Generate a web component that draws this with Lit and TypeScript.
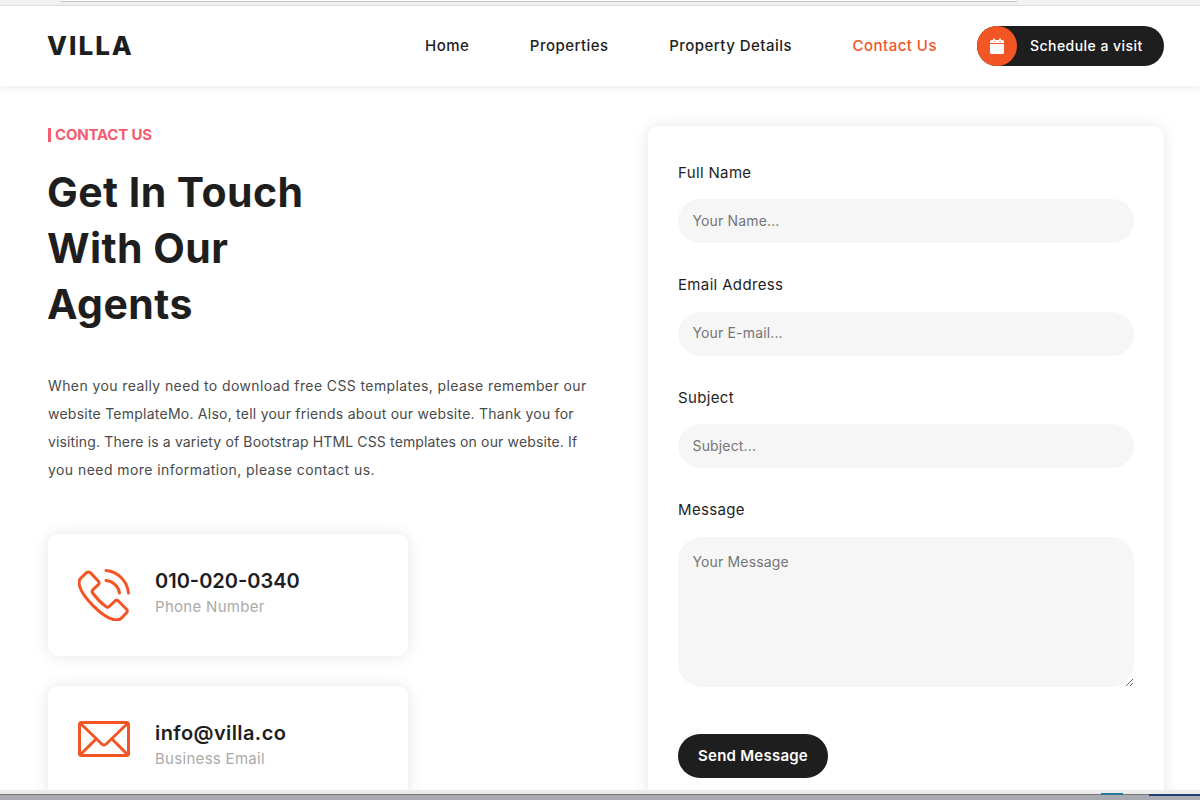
import { LitElement, html, css, svg } from 'lit';
import { customElement } from 'lit/decorators.js';

const phoneIcon = svg`
  <path d="M8.500 3.700Q10.500 2.300 12.500 3.900L20.500 12.300Q21.800 14 20.300 15.600L15 20.600Q13.500 22.200 14.600 24Q21 32.500 28 37.600Q30 38.800 31.500 37.300L37 32Q38.700 30.600 40.300 32L48.600 40.200Q50 42 48.600 43.800L43.300 49.300Q40.500 51.500 36.500 50.800C24 48.500 3.500 27 1.200 15.500Q.5 11.800 2.500 9.500Z" />
  <path d="M28 1.500A25 25 0 0 1 50.500 24" />
  <path d="M28 11.500A15 15 0 0 1 41.500 24" />
`;

const mailIcon = svg`
  <rect x="1.500" y="1.500" width="49" height="33" rx="2" />
  <path d="M2.500 2.500 23.800 23c1.300 1.200 3.100 1.200 4.400 0L49.500 2.500" />
  <path d="M2.500 33.500 17.500 18.500M49.500 33.500 34.500 18.500" />
`;

@customElement('site-header')
export class SiteHeader extends LitElement {
  static styles = css`
    :host {
      display: block;
    }

    .browser-edge {
      height: 5px;
      background: #f3f3f3;
      border-bottom: 1px solid #e4e4e4;
      display: flex;
      padding-left: 60px;
      padding-right: 182px;
    }

    .browser-edge div {
      flex: 1;
      height: 1px;
      background: #fff;
      border-bottom: 1px solid #c4c4c4;
      border-radius: 0 0 6px 6px;
    }

    header {
      height: 80px;
      padding: 0 36px 0 47px;
      display: flex;
      align-items: center;
      justify-content: space-between;
      background: #fff;
      box-shadow: 0 2px 8px rgba(0, 0, 0, 0.08);
      position: relative;
    }

    .logo {
      font-size: 26px;
      font-weight: 800;
      letter-spacing: 2px;
      color: #1e1e1e;
      padding-bottom: 2px;
    }

    nav {
      display: flex;
      align-items: center;
    }

    nav a {
      font-size: 15px;
      font-weight: 500;
      letter-spacing: 0.47px;
      color: #1e1e1e;
      margin-right: 60.500px;
      padding-bottom: 2px;
    }

    nav a.active {
      color: #f35525;
      margin-right: 40px;
    }

    .visit {
      width: 187px;
      height: 40px;
      border-radius: 20px;
      background: #1e1e1e;
      color: #fff;
      font-size: 14px;
      font-weight: 500;
      letter-spacing: 0.45px;
      display: flex;
      align-items: center;
      gap: 13px;
    }

    .visit .text {
      padding-bottom: 2px;
    }

    .visit .dot {
      width: 40px;
      height: 40px;
      border-radius: 50%;
      background: #f35525;
      display: flex;
      align-items: center;
      justify-content: center;
    }
  `;

  render() {
    return html`
      <div class="browser-edge"><div></div></div>
      <header>
        <div class="logo">VILLA</div>
        <nav>
          <a>Home</a>
          <a>Properties</a>
          <a>Property Details</a>
          <a class="active">Contact Us</a>
          <div class="visit">
            <span class="dot">
              <svg width="14" height="16" viewBox="0 0 14 16" fill="#fff">
                <rect x="3" y="0.500" width="2" height="3" rx="0.500" />
                <rect x="9" y="0.500" width="2" height="3" rx="0.500" />
                <path d="M1.500 2H3v2h2V2h4v2h2V2h1.500A1.500 1.500 0 0 1 14 3.500V5H0V3.500A1.500 1.500 0 0 1 1.500 2z" />
                <path d="M0 6h14v8.500a1.500 1.500 0 0 1-1.500 1.500h-11A1.500 1.500 0 0 1 0 14.500z" />
              </svg>
            </span>
            <span class="text">Schedule a visit</span>
          </div>
        </nav>
      </header>
    `;
  }
}

@customElement('contact-card')
export class ContactCard extends LitElement {
  static properties = {
    title: { type: String },
    label: { type: String },
  };

  declare title: string;
  declare label: string;

  static styles = css`
    :host {
      display: block;
    }

    .card {
      width: 360px;
      height: 122px;
      padding: 35px 0 0 30px;
      box-sizing: border-box;
      display: flex;
      align-items: flex-start;
      gap: 25px;
      background: #fff;
      border-radius: 10px;
      box-shadow: 0 0 15px rgba(0, 0, 0, 0.1);
    }

    .icon {
      width: 52px;
      display: flex;
      justify-content: center;
    }

    h6 {
      margin: 0 0 4px;
      font-size: 20px;
      line-height: 24px;
      font-weight: 600;
      color: #1e1e1e;
    }

    :host([wide]) h6 {
      letter-spacing: 0.4px;
    }

    span {
      display: block;
      font-size: 15px;
      letter-spacing: 0.3px;
      line-height: 20px;
      color: #aaa;
    }
  `;

  render() {
    return html`
      <div class="card">
        <div class="icon"><slot></slot></div>
        <div>
          <h6>${this.title}</h6>
          <span>${this.label}</span>
        </div>
      </div>
    `;
  }
}

@customElement('app-root')
export class AppRoot extends LitElement {
  static styles = css`
    :host {
      display: block;
      height: 800px;
      overflow: hidden;
      position: relative;
      font-family: Inter, "Open Sans", sans-serif;
      color: #1e1e1e;
      background: #fff;
    }

    main {
      display: grid;
      grid-template-columns: 550px 516px;
      justify-content: space-between;
      padding: 40px 36px 0 48px;
    }

    .eyebrow {
      margin: 0;
      font-size: 15px;
      letter-spacing: -0.2px;
      line-height: 18px;
      font-weight: 700;
      color: #f25c6e;
      text-transform: uppercase;
    }

    .eyebrow::before {
      content: "";
      display: inline-block;
      width: 3px;
      height: 14px;
      margin-right: 4px;
      vertical-align: -2px;
      background: #f25c6e;
    }

    h2 {
      margin: 20px 0 0 -1px;
      font-size: 41px;
      letter-spacing: 0.45px;
      line-height: 56px;
      font-weight: 700;
      color: #1e1e1e;
      width: 300px;
    }

    p {
      margin: 40px 0 0;
      font-size: 14px;
      line-height: 28px;
      color: #4a4a4a;
      white-space: nowrap;
    }

    p span {
      display: block;
    }

    .l1 {
      letter-spacing: 0.4px;
    }

    .l2 {
      letter-spacing: 0.24px;
    }

    .l3 {
      letter-spacing: 0.14px;
    }

    .l4 {
      letter-spacing: 0.44px;
    }

    .cards {
      display: flex;
      flex-direction: column;
      gap: 30px;
      margin-top: 50px;
    }

    .cards svg {
      display: block;
      fill: none;
      stroke: #f35525;
      stroke-width: 3;
      stroke-linecap: round;
      stroke-linejoin: round;
    }

    form {
      background: #fff;
      border-radius: 10px;
      box-shadow: 0 0 15px rgba(0, 0, 0, 0.1);
      padding: 35.900px 30px 0;
      height: 700px;
    }

    label {
      display: block;
      font-size: 15px;
      letter-spacing: 0.35px;
      line-height: 22px;
      color: #1e1e1e;
      margin-bottom: 15.200px;
    }

    input,
    textarea {
      display: block;
      width: 100%;
      box-sizing: border-box;
      height: 44px;
      border: none;
      outline: none;
      border-radius: 22px;
      background: #f6f6f6;
      padding: 0 14.500px 2px;
      margin-bottom: 31.300px;
      font: inherit;
      font-size: 14px;
      letter-spacing: 0.15px;
    }

    input::placeholder,
    textarea::placeholder {
      color: #757575;
      opacity: 1;
    }

    textarea {
      height: 150px;
      border-radius: 24px;
      padding: 15px 14.500px;
      line-height: 20px;
      margin-bottom: 47px;
    }

    button {
      display: block;
      width: 150px;
      height: 44px;
      padding: 0;
      border: none;
      border-radius: 22px;
      background: #1e1e1e;
      color: #fff;
      font: inherit;
      font-size: 15px;
      letter-spacing: 0.25px;
      font-weight: 600;
    }

    .taskbar {
      position: absolute;
      left: 0;
      right: 0;
      bottom: 0;
      height: 10px;
      background: linear-gradient(#ececec 0 4px, #777 4px 5px, #a9aab2 5px);
    }

    .taskbar i {
      position: absolute;
      top: 4px;
      height: 2px;
    }

    .taskbar .teal {
      left: 1101px;
      width: 22px;
      top: 3px;
      background: #2a7a9a;
    }

    .taskbar .blue {
      left: 1149px;
      right: 0;
      background: #1c3f73;
    }
  `;

  render() {
    return html`
      <site-header></site-header>
      <main>
        <section>
          <h6 class="eyebrow">Contact Us</h6>
          <h2>Get In Touch With Our Agents</h2>
          <p>
            <span class="l1">When you really need to download free CSS templates, please remember our</span>
            <span class="l2">website TemplateMo. Also, tell your friends about our website. Thank you for</span>
            <span class="l3">visiting. There is a variety of Bootstrap HTML CSS templates on our website. If</span>
            <span class="l4">you need more information, please contact us.</span>
          </p>
          <div class="cards">
            <contact-card title="010-020-0340" label="Phone Number">
              <svg width="52" height="52" viewBox="0 0 52 52">${phoneIcon}</svg>
            </contact-card>
            <contact-card wide title="info@villa.co" label="Business Email">
              <svg width="52" height="36" viewBox="0 0 52 36">${mailIcon}</svg>
            </contact-card>
          </div>
        </section>
        <form>
          <label for="name">Full Name</label>
          <input id="name" placeholder="Your Name..." />
          <label for="email">Email Address</label>
          <input id="email" placeholder="Your E-mail..." />
          <label for="subject">Subject</label>
          <input id="subject" placeholder="Subject..." />
          <label for="message">Message</label>
          <textarea id="message" placeholder="Your Message"></textarea>
          <button type="button">Send Message</button>
        </form>
      </main>
      <div class="taskbar"><i class="teal"></i><i class="blue"></i></div>
    `;
  }
}
